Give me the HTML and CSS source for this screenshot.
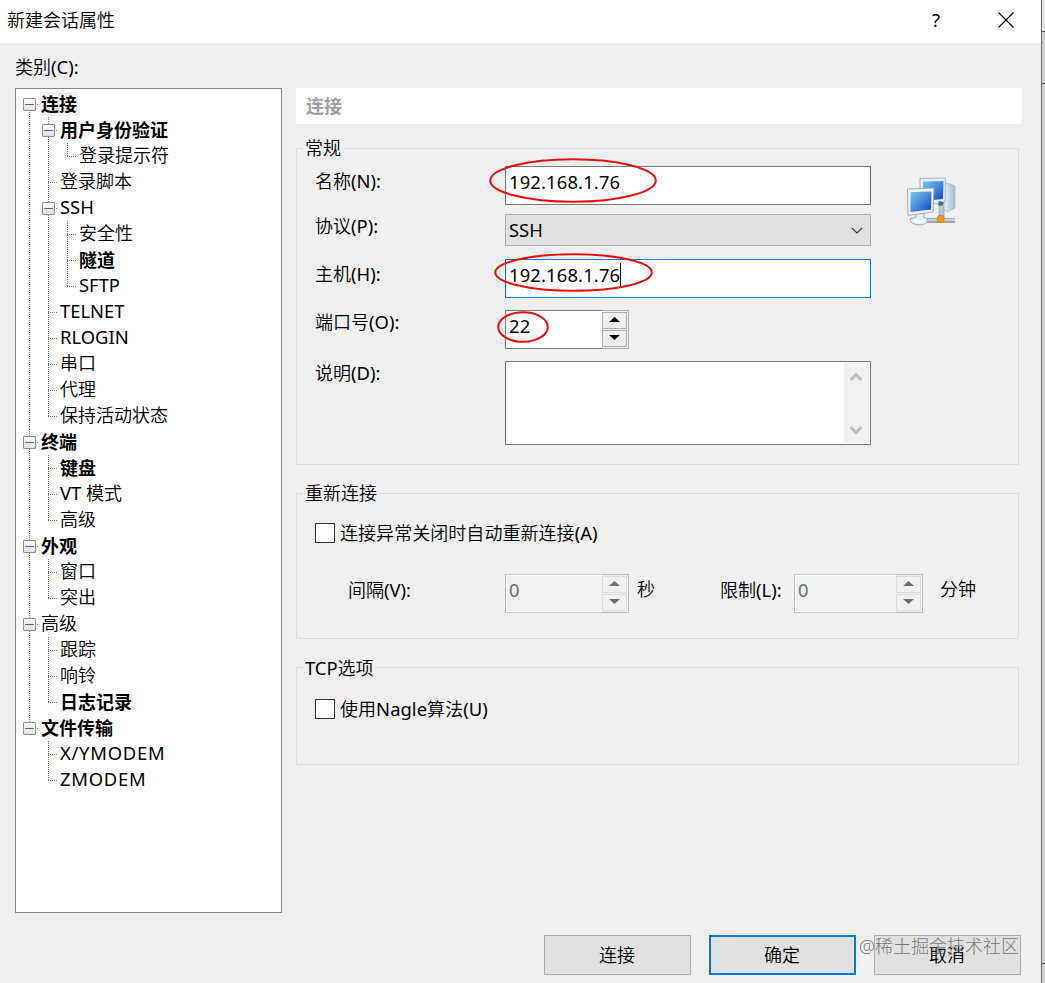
FILE: index.html
```html
<!DOCTYPE html>
<html lang="zh-CN">
<head>
    <meta charset="UTF-8">
    <meta name="viewport" content="width=device-width, initial-scale=1.0">
    <title>新建会话属性</title>
    <link rel="stylesheet" href="styles.css">
</head>
<body>

<div class="dialog">
    <header class="titlebar">
        <span class="title">新建会话属性</span>
        <span class="help latin">?</span>
        <svg class="close" width="16" height="16" viewBox="0 0 16 16"><path d="M.5 .5L15.500 15.500M15.500 .5L.5 15.500" stroke="#000" stroke-width="1.1"/></svg>
    </header>

    <main class="content">
        <section class="sidebar">
            <div class="sidebar-label">类别<span class="latin">(C):</span></div>
            <ul class="tree">
                <li>
                    <div class="node open bold selected"><i></i><span>连接</span></div>
                    <ul>
                        <li>
                            <div class="node open bold"><i></i><span>用户身份验证</span></div>
                            <ul>
                                <li><div class="node"><i></i><span>登录提示符</span></div></li>
                            </ul>
                        </li>
                        <li><div class="node"><i></i><span>登录脚本</span></div></li>
                        <li>
                            <div class="node open latin"><i></i><span>SSH</span></div>
                            <ul>
                                <li><div class="node"><i></i><span>安全性</span></div></li>
                                <li><div class="node bold"><i></i><span>隧道</span></div></li>
                                <li><div class="node latin"><i></i><span>SFTP</span></div></li>
                            </ul>
                        </li>
                        <li><div class="node latin"><i></i><span>TELNET</span></div></li>
                        <li><div class="node latin"><i></i><span>RLOGIN</span></div></li>
                        <li><div class="node"><i></i><span>串口</span></div></li>
                        <li><div class="node"><i></i><span>代理</span></div></li>
                        <li><div class="node"><i></i><span>保持活动状态</span></div></li>
                    </ul>
                </li>
                <li>
                    <div class="node open bold"><i></i><span>终端</span></div>
                    <ul>
                        <li><div class="node bold"><i></i><span>键盘</span></div></li>
                        <li><div class="node"><i></i><span><b class="latin">VT </b>模式</span></div></li>
                        <li><div class="node"><i></i><span>高级</span></div></li>
                    </ul>
                </li>
                <li>
                    <div class="node open bold"><i></i><span>外观</span></div>
                    <ul>
                        <li><div class="node"><i></i><span>窗口</span></div></li>
                        <li><div class="node"><i></i><span>突出</span></div></li>
                    </ul>
                </li>
                <li>
                    <div class="node open"><i></i><span>高级</span></div>
                    <ul>
                        <li><div class="node"><i></i><span>跟踪</span></div></li>
                        <li><div class="node"><i></i><span>响铃</span></div></li>
                        <li><div class="node bold"><i></i><span>日志记录</span></div></li>
                    </ul>
                </li>
                <li>
                    <div class="node open bold"><i></i><span>文件传输</span></div>
                    <ul>
                        <li><div class="node latin modem"><i></i><span>X/YMODEM</span></div></li>
                        <li><div class="node latin modem"><i></i><span>ZMODEM</span></div></li>
                    </ul>
                </li>
            </ul>
        </section>

        <section class="panel">
            <h1 class="panel-title">连接</h1>

            <fieldset class="group general">
                <legend>常规</legend>
                <div class="form">
                    <div class="row row-name">
                        <label>名称<span class="latin">(N):</span></label>
                        <div class="field latin">192.168.1.76</div>
                        <svg class="mark mark-name" width="168" height="45"><ellipse cx="84" cy="22.500" rx="82.800" ry="21.300"/></svg>
                    </div>
                    <div class="row row-protocol">
                        <label>协议<span class="latin">(P):</span></label>
                        <div class="select latin">
                            <span>SSH</span>
                            <svg width="12" height="7" viewBox="0 0 12 7"><path d="M.8 .8L6 6L11.200 .8" fill="none" stroke="#333" stroke-width="1.2"/></svg>
                        </div>
                    </div>
                    <div class="row row-host">
                        <label>主机<span class="latin">(H):</span></label>
                        <div class="field latin focused">192.168.1.76<span class="caret"></span></div>
                        <svg class="mark mark-host" width="159" height="39"><ellipse cx="79.500" cy="19.500" rx="78.300" ry="18.300"/></svg>
                    </div>
                    <div class="row row-port">
                        <label>端口号<span class="latin">(O):</span></label>
                        <div class="spinner">
                            <span class="value latin">22</span>
                            <div class="arrows">
                                <b><svg width="11" height="5"><path d="M0 5L5.500 0L11 5Z"/></svg></b>
                                <b><svg width="11" height="5"><path d="M0 0L5.500 5L11 0Z"/></svg></b>
                            </div>
                        </div>
                        <svg class="mark mark-port" width="52" height="32"><ellipse cx="26" cy="16" rx="24.800" ry="14.800"/></svg>
                    </div>
                    <div class="row row-desc">
                        <label>说明<span class="latin">(D):</span></label>
                        <div class="textarea">
                            <div class="scrollbar">
                                <svg width="12" height="10" viewBox="0 0 12 10"><path d="M.5 8L6 2.500L11.500 8" fill="none" stroke="#bdbdbd" stroke-width="2.800"/></svg>
                                <svg width="12" height="10" viewBox="0 0 12 10"><path d="M.5 2L6 7.500L11.500 2" fill="none" stroke="#bdbdbd" stroke-width="2.800"/></svg>
                            </div>
                        </div>
                    </div>
                </div>

                <!-- networked computers -->
                <svg class="session-icon" width="52" height="52" viewBox="0 0 52 52">
                    <defs>
                        <linearGradient id="screen" x1="0" y1="0" x2="1" y2="1">
                            <stop offset="0" stop-color="#82c7f2"/>
                            <stop offset=".5" stop-color="#478bdd"/>
                            <stop offset="1" stop-color="#163fb6"/>
                        </linearGradient>
                        <linearGradient id="tower" x1="0" y1="0" x2="1" y2="0">
                            <stop offset="0" stop-color="#f5f9fc"/>
                            <stop offset="1" stop-color="#a9bccb"/>
                        </linearGradient>
                    </defs>
                    <path d="M39 6L46 7.500L49 9V31L41 35L36 31Z" fill="url(#tower)" stroke="#a5b5c1" stroke-width=".7"/>
                    <path d="M33 26H38V41H33Z" fill="#b8c6cd" stroke="#8c9ca5" stroke-width=".6"/>
                    <path d="M14 1.500L39.500 1L39 25L27 27L14 25Z" fill="#e7edf1" stroke="#a5b7c2"/>
                    <path d="M17 4.500L37.500 4L37 22L17 24Z" fill="url(#screen)"/>
                    <path d="M21 41H49V46H21Z" fill="#9ba7ae"/>
                    <path d="M21 43H49" stroke="#e3e8eb" stroke-width="1.400"/>
                    <path d="M10 36H18V41H21Q24 46 15 48Q4 48 4 42L10 40Z" fill="#e7edf0" stroke="#9badb7"/>
                    <path d="M8 43Q14 47 20 42" fill="none" stroke="#fff" stroke-width="2"/>
                    <path d="M1.500 12L28 11L27 35L2 38.500Z" fill="#eff4f7" stroke="#98aebc"/>
                    <path d="M4.500 15L25.500 14.500L25 32.500L4.500 35Z" fill="url(#screen)"/>
                    <path d="M33 24L38 25L36 29L32 28Z" fill="#3d7485"/>
                    <rect x="31.500" y="38.500" width="6.500" height="7" rx="2" fill="#f19b0b" stroke="#bd7909" stroke-width=".6"/>
                </svg>
            </fieldset>

            <fieldset class="group reconnect">
                <legend>重新连接</legend>
                <div class="check"><span class="box"></span>连接异常关闭时自动重新连接<span class="latin">(A)</span></div>
                <div class="limits">
                    <label class="interval-label">间隔<span class="latin">(V):</span></label>
                    <div class="spinner disabled">
                        <span class="value latin">0</span>
                        <div class="arrows">
                            <b><svg width="11" height="5"><path d="M0 5L5.500 0L11 5Z"/></svg></b>
                            <b><svg width="11" height="5"><path d="M0 0L5.500 5L11 0Z"/></svg></b>
                        </div>
                    </div>
                    <span class="unit">秒</span>
                    <label class="limit-label">限制<span class="latin">(L):</span></label>
                    <div class="spinner wide disabled">
                        <span class="value latin">0</span>
                        <div class="arrows">
                            <b><svg width="11" height="5"><path d="M0 5L5.500 0L11 5Z"/></svg></b>
                            <b><svg width="11" height="5"><path d="M0 0L5.500 5L11 0Z"/></svg></b>
                        </div>
                    </div>
                    <span class="unit-min">分钟</span>
                </div>
            </fieldset>

            <fieldset class="group tcp">
                <legend><span class="latin">TCP</span>选项</legend>
                <div class="check"><span class="box"></span>使用<span class="latin">Nagle</span>算法<span class="latin">(U)</span></div>
            </fieldset>
        </section>
    </main>

    <footer class="buttons">
        <button type="button">连接</button>
        <button type="button" class="default">确定</button>
        <button type="button">取消</button>
        <span class="watermark">@稀土掘金技术社区</span>
    </footer>
</div>

<!-- Sliver of the window behind the dialog -->
<div class="behind"></div>

</body>
</html>
```
FILE: styles.css
```css
* {
    box-sizing: border-box;
}

body {
    margin: 0;
    display: flex;
    width: 1045px;
    height: 983px;
    overflow: hidden;
    background: #efefef;
    color: #000;
    font-family: "Noto Sans", "Noto Sans CJK SC", sans-serif;
    font-size: 18px;
    font-weight: 350;
    line-height: 26px;
}

/* Latin letters need a little more weight than the Chinese ones */
.latin {
    font-size: 18.4px;
    font-weight: 400;
}

.dialog {
    width: 1042px;
    height: 983px;
    border-right: 1px solid #6b6b6b;
    display: flex;
    flex-direction: column;
}

.behind {
    flex: 1;
    background:
        linear-gradient(#666, #666) 0 31px / 100% 1px no-repeat,
        linear-gradient(#888, #888) 0 42px / 1px 1px no-repeat,
        linear-gradient(#666, #666) 0 83px / 100% 1px no-repeat,
        linear-gradient(#666, #666) 0 963px / 100% 1px no-repeat,
        linear-gradient(#e3e3e3 31px, #cfcfcf 31px);
}

/* Title bar */
.titlebar {
    display: flex;
    align-items: center;
    flex: none;
    height: 43px;
    padding: 0 27px 3px 7px;
    background: #fff;
}

.title {
    flex: 1;
}

.help {
    margin-right: 58px;
}

.content {
    display: flex;
    flex: none;
    height: 870px;
}

/* Category tree */
.sidebar {
    width: 267px;
    margin-left: 15px;
    display: flex;
    flex-direction: column;
}

.sidebar-label {
    height: 45px;
    padding-top: 11px;
}

ul {
    margin: 0;
    padding: 0;
    list-style: none;
}

.tree {
    flex: 1;
    padding: 2px 7px;
    border: 1px solid #828790;
    background: #fff;
}

.tree ul {
    margin-left: 19px;
}

.tree li {
    background: repeating-linear-gradient(#777 0 1px, transparent 1px 2px) 6px 0 / 1px 100% no-repeat;
}

.tree li:last-child {
    background-size: 1px 14px;
}

.tree > li:first-child {
    background-position: 6px 13px;
}

.node {
    display: flex;
    align-items: center;
    height: 26px;
    background: repeating-linear-gradient(90deg, #777 0 1px, transparent 1px 2px) 6px 13px / 10px 1px no-repeat;
}

.node i {
    flex: none;
    width: 13px;
    height: 13px;
    margin-right: 4px;
}

.node.open i {
    border: 1px solid #919191;
    border-radius: 1px;
    background:
        linear-gradient(#4b63a7, #4b63a7) 1px 5px / 9px 1px no-repeat,
        linear-gradient(#fff, #dedede);
}

.node span {
    padding: 0 1px 2px;
    line-height: 24px;
}

.node.bold span {
    padding-bottom: 0;
    font-weight: 700;
}

.selected span {
    background: #f0f0f0;
}

.modem span {
    letter-spacing: .75px;
}

/* Settings panel */
.panel {
    width: 726px;
    margin-left: 14px;
    padding-top: 45px;
}

.panel-title {
    height: 36px;
    margin: 0 0 14px;
    padding-left: 10px;
    background: #fff;
    color: #a0a0a0;
    font-size: 18px;
    line-height: 36px;
}

.group {
    display: flex;
    width: 723px;
    margin: 0;
    padding: 0 0 0 18px;
    border: 1px solid #dcdcdc;
}

.group legend {
    height: 20px;
    margin-left: -12px;
    padding: 0 2px;
    line-height: 21px;
}

.general {
    height: 327px;
}

.form {
    width: 556px;
    padding-top: 8px;
}

.row {
    position: relative;
    display: flex;
    align-items: flex-start;
}

.row label {
    width: 190px;
    line-height: 28px;
}

.row-name {
    height: 48px;
}

.row-name label {
    padding-top: 1px;
}

.row-protocol {
    height: 45px;
}

.row-protocol label {
    line-height: 24px;
}

.row-host {
    height: 51px;
}

.row-host label {
    line-height: 30px;
}

.row-port {
    height: 51px;
}

.row-port label {
    line-height: 24px;
}

.row-desc label {
    line-height: 24px;
}

.field {
    display: flex;
    width: 366px;
    height: 39px;
    padding: 0 3px;
    border: 1px solid #7a7a7a;
    background: #fff;
    line-height: 29px;
    letter-spacing: .15px;
}

.focused {
    border-color: #0078d7;
}

.caret {
    width: 1px;
    height: 23px;
    margin-top: 3px;
    background: #000;
}

.select {
    display: flex;
    align-items: center;
    justify-content: space-between;
    width: 366px;
    height: 32px;
    padding: 0 7px 0 3px;
    border: 1px solid #adadad;
    background: #e1e1e1;
}

.spinner {
    display: flex;
    width: 124px;
    height: 39px;
    border: 1px solid #adadad;
    border-left-color: #7a7a7a;
    background: #fff;
}

.spinner.wide {
    width: 129px;
}

.spinner .value {
    flex: 1;
    margin: -1px 0;
    padding-left: 3px;
    border: solid #7a7a7a;
    border-width: 1px 0;
    line-height: 29px;
    letter-spacing: .15px;
}

.arrows {
    display: flex;
    flex-direction: column;
    gap: 1px;
    width: 26px;
    padding: 1px 1px 1px 0;
    background: #f0f0f0;
}

.arrows b {
    flex: 1;
    display: flex;
    align-items: center;
    justify-content: center;
    padding: 0 1px 2px 0;
    border: 1px solid #adadad;
    background: #f0f0f0;
}

.spinner.disabled {
    border-color: #bcbcbc;
    background: #f0f0f0;
    box-shadow: inset 1px 1px #fff, inset 0 -1px #fff;
    color: #6d6d6d;
}

.spinner.disabled .value {
    border-color: #ccc;
}

.disabled .arrows b {
    border-color: #dcdcdc;
}

.disabled path {
    fill: #6d6d6d;
}

.textarea {
    width: 366px;
    height: 84px;
    padding: 1px;
    border: 1px solid #7a7a7a;
    background: #fff;
    display: flex;
    justify-content: flex-end;
}

.scrollbar {
    display: flex;
    flex-direction: column;
    align-items: center;
    justify-content: space-between;
    width: 25px;
    padding: 9px 1px 8px 0;
    background: #f0f0f0;
}

/* Red ellipses drawn round the values */
.mark {
    position: absolute;
    fill: none;
    stroke: #e50f0f;
    stroke-width: 2;
}

.mark-name {
    left: 174px;
    top: -8px;
}

.mark-host {
    left: 179px;
    top: -6px;
}

.mark-port {
    left: 182px;
    top: 1px;
}

.session-icon {
    margin: 19px 0 0 35px;
}

.reconnect {
    display: block;
    height: 156px;
    margin-top: 18px;
}

.check {
    display: flex;
    align-items: center;
    height: 26px;
    margin-top: 17px;
    letter-spacing: .05px;
}

.box {
    width: 20px;
    height: 20px;
    margin-right: 5px;
    border: 1px solid #333;
    background: #fff;
}

.limits {
    display: flex;
    margin-top: 28px;
    line-height: 31px;
}

.interval-label {
    width: 157px;
    margin-left: 33px;
}

.unit {
    width: 91px;
    padding-left: 8px;
}

.limit-label {
    width: 74px;
}

.unit-min {
    padding-left: 17px;
}

.tcp {
    display: block;
    height: 108px;
    margin-top: 18px;
}

.tcp .check {
    margin-top: 19px;
}

/* Bottom buttons */
.buttons {
    position: relative;
    display: flex;
    justify-content: flex-end;
    gap: 18px;
    padding: 22px 20px 0 0;
}

button {
    width: 147px;
    height: 40px;
    padding: 0 1px 0 0;
    border: 1px solid #adadad;
    background: #e1e1e1;
    color: #000;
    font: inherit;
}

.default {
    border: 2px solid #0078d7;
}

.watermark {
    position: absolute;
    right: 22px;
    top: 20px;
    color: rgba(90, 90, 90, .8);
    font-weight: 300;
}
```
